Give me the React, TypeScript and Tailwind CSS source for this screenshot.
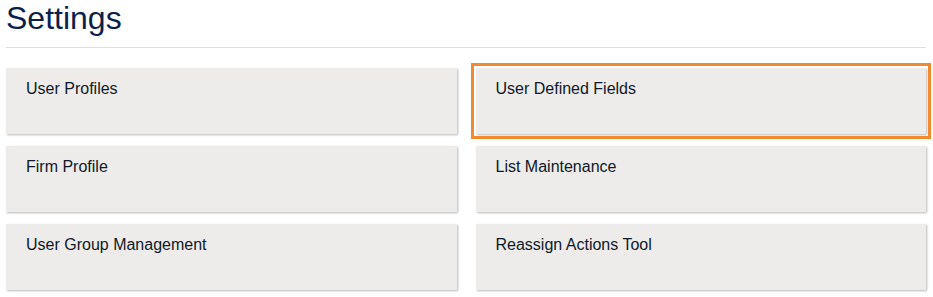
const tiles = [
  { label: "User Profiles" },
  { label: "User Defined Fields", active: true },
  { label: "Firm Profile" },
  { label: "List Maintenance" },
  { label: "User Group Management" },
  { label: "Reassign Actions Tool" },
];

export default function App() {
  return (
    <div className="min-h-screen bg-white px-[6px] pt-[2px] font-['Liberation_Sans',Arial,sans-serif]">
      <div className="w-[920px]">
        <h1 className="text-[32px] leading-none text-[#0b1f4b] pb-[13px]">Settings</h1>
        <div className="h-px bg-[#dedede]" />

        {/* Settings tiles */}
        <div className="grid grid-cols-2 gap-x-[19px] gap-y-[12px] mt-[20px]">
          {tiles.map((t) => (
            <div
              key={t.label}
              className={`h-[66px] bg-[#edecea] pl-[20px] pt-[9px] shadow-[1px_1px_2px_rgba(0,0,0,0.28)] ${
                t.active ? "outline-[3px] outline-solid outline-[#f28a30] outline-offset-2" : ""
              }`}
            >
              <span className="text-[16px] leading-6 text-[#111827]">{t.label}</span>
            </div>
          ))}
        </div>
      </div>
    </div>
  );
}
